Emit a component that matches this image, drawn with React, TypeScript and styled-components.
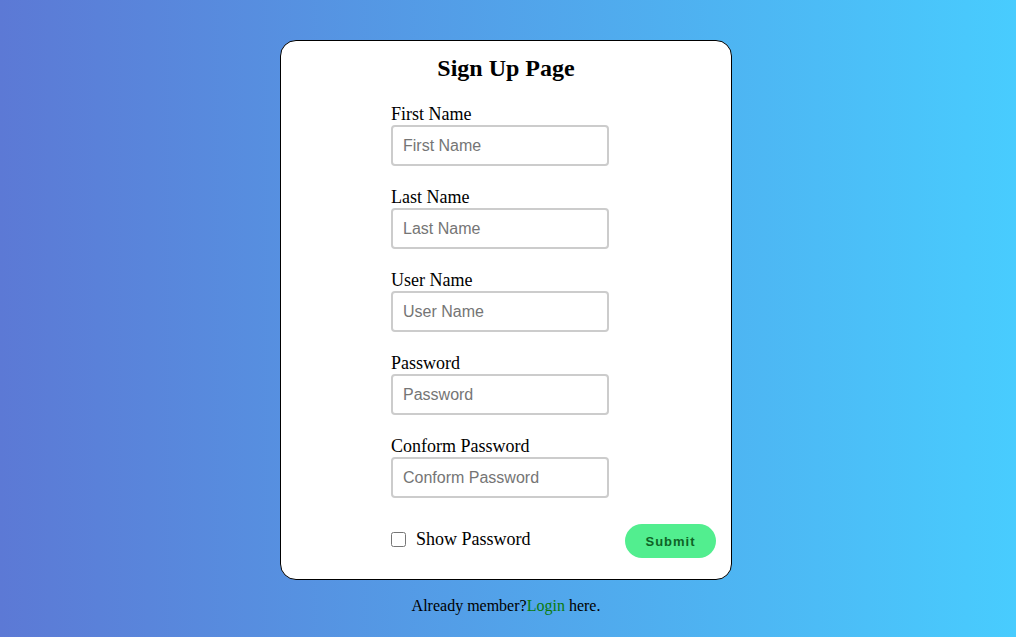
import { useState } from "react";
import styled, { createGlobalStyle } from "styled-components";

const GlobalStyle = createGlobalStyle`
	body {
		margin: 0;
		font-family: "Liberation Serif", "Times New Roman", serif;
	}
`;

const fields = [
	{ id: "firstName", label: "First Name" },
	{ id: "lastName", label: "Last Name" },
	{ id: "userName", label: "User Name" },
	{ id: "password", label: "Password", secret: true },
	{ id: "confirm", label: "Conform Password", secret: true },
];

const App = () => {
	const [show, setShow] = useState(false);

	return (
		<>
			<GlobalStyle />
			<Page>
				<Card>
					<Title>Sign Up Page</Title>
					<Form onSubmit={(e) => e.preventDefault()}>
						{fields.map((f) => (
							<Field key={f.id}>
								<Label htmlFor={f.id}>{f.label}</Label>
								<Input
									id={f.id}
									type={f.secret && !show ? "password" : "text"}
									placeholder={f.label}
								/>
							</Field>
						))}
						<BottomRow>
							<CheckLabel>
								<Check
									type="checkbox"
									checked={show}
									onChange={() => setShow(!show)}
								/>
								Show Password
							</CheckLabel>
							<SubmitButton type="submit">Submit</SubmitButton>
						</BottomRow>
					</Form>
				</Card>
				<Footer>
					Already member?<LoginLink href="#">Login</LoginLink> here.
				</Footer>
			</Page>
		</>
	);
};

const Page = styled.div`
	display: flex;
	flex-direction: column;
	align-items: center;
	min-height: 100vh;
	box-sizing: border-box;
	padding: 40px 4px 0 0;
	background: linear-gradient(to right, #5c79d5, #48ccfe);
`;

const Card = styled.div`
	width: 452px;
	box-sizing: border-box;
	padding: 13px 15px 21px;
	background: #fff;
	border: 1px solid #000;
	border-radius: 16px;
`;

const Title = styled.h2`
	margin: 0 0 22px;
	text-align: center;
	font-size: 24px;
	line-height: 28px;
	font-weight: bold;
	color: #000;
`;

const Form = styled.form`
	display: flex;
	flex-direction: column;
	gap: 21px;
	padding-left: 95px;
`;

const Field = styled.div`
	display: flex;
	flex-direction: column;
	align-items: flex-start;
`;

const Label = styled.label`
	font-size: 18px;
	line-height: 21px;
	color: #000;
`;

const Input = styled.input`
	width: 218px;
	height: 41px;
	box-sizing: border-box;
	padding: 0 10px;
	border: 2px solid #ccc;
	border-radius: 4px;
	font-family: "Liberation Sans", Arial, sans-serif;
	font-size: 16px;
	color: #333;
	outline: none;

	&::placeholder {
		color: #757575;
	}
`;

const BottomRow = styled.div`
	display: flex;
	justify-content: space-between;
	align-items: center;
	margin-top: 5px;
`;

const CheckLabel = styled.label`
	display: flex;
	align-items: center;
	font-size: 18px;
	color: #000;
	margin-top: -4px;
`;

const Check = styled.input`
	width: 15px;
	height: 15px;
	margin: 0 10px 0 0;
`;

const SubmitButton = styled.button`
	width: 91px;
	height: 34px;
	border: none;
	border-radius: 17px;
	background: #52ee8f;
	color: #0e6326;
	font-family: "Liberation Sans", Arial, sans-serif;
	font-size: 13px;
	font-weight: bold;
	letter-spacing: 1px;
	cursor: pointer;
`;

const Footer = styled.p`
	margin: 17px 0 0;
	font-size: 16px;
	line-height: 18px;
	color: #000;
`;

const LoginLink = styled.a`
	color: #0a7a0a;
	text-decoration: none;
`;

export default App;
